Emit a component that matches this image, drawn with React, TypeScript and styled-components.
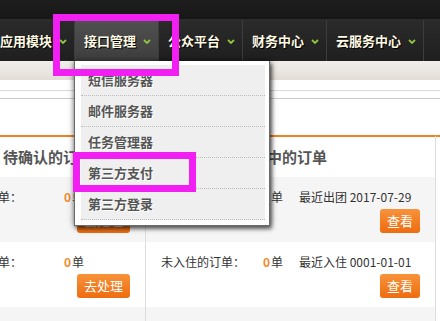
import React from 'react';
import styled, { createGlobalStyle } from 'styled-components';

const GlobalStyle = createGlobalStyle`
  html, body {
    margin: 0;
    padding: 0;
    background: #fff;
    overflow: hidden;
  }
  body {
    font-family: "Noto Sans CJK SC", "Liberation Sans", sans-serif;
  }
`;

const Page = styled.div`
  position: relative;
  width: 440px;
  height: 321px;
  overflow: hidden;
  background: #fff;
`;

const TopBand = styled.div`
  height: 19px;
  background: linear-gradient(#1e1e1e, #171717);
  border-bottom: 1px solid #2e2e2e;
`;

const NavBar = styled.nav`
  height: 41px;
  display: flex;
  margin-left: -9px;
  background: linear-gradient(#2b2b2b, #1f1f1f);
  box-shadow: 0 1px 2px rgba(0, 0, 0, 0.5);
`;

const NavItem = styled.div<{ $active?: boolean }>`
  display: flex;
  align-items: center;
  flex-shrink: 0;
  padding: 0 7px 0 9px;
  border-right: 1px solid #3d3d3d;
  background: ${p => (p.$active ? 'linear-gradient(#505050, #3e3e3e)' : 'transparent')};
  color: #fffae3;
  font-size: 13px;
  font-weight: bold;
  white-space: nowrap;
  text-shadow: 1px 1px 0 #000;
`;

const Chevron = styled.svg`
  margin-left: 7px;
  margin-top: 2px;
`;

const SubBand = styled.div`
  height: 19px;
  background: linear-gradient(#f1efeb, #e9e5e0 60%, #e2ddd6);
`;

const Crumbs = styled.div`
  height: 7px;
  margin-top: 10px;
  border-top: 1px solid #dadada;
  border-bottom: 1px solid #c9c9c9;
`;

const Panels = styled.div`
  display: flex;
  margin-top: 36px;
  margin-left: -53px;
`;

const Panel = styled.section<{ $width: number }>`
  flex-shrink: 0;
  width: ${p => p.$width}px;
  box-sizing: border-box;
  border-top: 2px solid #f08020;
  border-right: 1px solid #dddddd;
`;

const PanelTitle = styled.h3<{ $indent: number }>`
  margin: 0;
  height: 40px;
  line-height: 40px;
  padding-left: ${p => p.$indent}px;
  font-size: 15px;
  font-weight: bold;
  color: #555;
  white-space: nowrap;
  overflow: hidden;
`;

const Row = styled.div`
  height: 65px;
  box-sizing: border-box;
  padding: 11px 15px 0;
  display: flex;
  flex-direction: column;
  background: #fff;

  &:nth-of-type(odd) {
    background: #f5f5f5;
  }
`;

const InfoLine = styled.div`
  display: flex;
  align-items: center;
  height: 16px;
  font-size: 12px;
  color: #333;
  white-space: nowrap;
`;

const Label = styled.span`
  width: 102px;
  flex-shrink: 0;
`;

const Count = styled.span`
  width: 36px;
  flex-shrink: 0;

  b {
    color: #f28a2e;
    font-weight: bold;
    margin-right: 1px;
  }
`;

const ActionButton = styled.button`
  align-self: flex-end;
  margin-top: 5px;
  height: 24px;
  padding: 0 7px;
  border: none;
  border-radius: 3px;
  background: linear-gradient(#f7933b, #ee6c10);
  color: #fff;
  font-family: inherit;
  font-size: 13px;
  line-height: 24px;
  cursor: pointer;
`;

const Dropdown = styled.ul`
  position: absolute;
  left: 74px;
  top: 61px;
  width: 196px;
  box-sizing: border-box;
  margin: 0;
  padding: 4px 4px 5px 6px;
  list-style: none;
  background: #fff;
  border: 1px solid #6a6a6a;
  border-top: none;
  box-shadow: 0 0 6px rgba(0, 0, 0, 0.55), 2px 3px 4px rgba(0, 0, 0, 0.5);
`;

const DropItem = styled.li`
  height: 30px;
  line-height: 30px;
  padding-left: 7px;
  background: #efefef;
  border-bottom: 1px dotted #bbbbbb;
  color: #555;
  font-size: 13px;
  font-weight: bold;
  text-shadow: 1px 1px 0 #fff;
  white-space: nowrap;
`;

const Highlight = styled.div<{ $x: number; $y: number; $w: number; $h: number }>`
  position: absolute;
  left: ${p => p.$x}px;
  top: ${p => p.$y}px;
  width: ${p => p.$w}px;
  height: ${p => p.$h}px;
  box-sizing: border-box;
  border: 7px solid #f21ff2;
  pointer-events: none;
`;

const navItems = ['应用模块', '接口管理', '公众平台', '财务中心', '云服务中心'];
const menuItems = ['短信服务器', '邮件服务器', '任务管理器', '第三方支付', '第三方登录'];

const ChevronIcon = () => (
  <Chevron width="8" height="5" viewBox="0 0 8 5">
    <polyline points="1,1 4,4 7,1" fill="none" stroke="#8dc63f" strokeWidth="1.8" />
  </Chevron>
);

export default function App() {
  return (
    <Page>
      <GlobalStyle />
      <TopBand />
      <NavBar>
        {navItems.map(item => (
          <NavItem key={item} $active={item === '接口管理'}>
            {item}
            <ChevronIcon />
          </NavItem>
        ))}
      </NavBar>
      <SubBand />
      <Crumbs />
      <Panels>
        <Panel $width={199}>
          <PanelTitle $indent={56}>待确认的订单</PanelTitle>
          <Row>
            <InfoLine>
              <Label>线路订单：</Label>
              <Count><b>0</b>单</Count>
            </InfoLine>
            <ActionButton>去处理</ActionButton>
          </Row>
          <Row>
            <InfoLine>
              <Label>酒店订单：</Label>
              <Count><b>0</b>单</Count>
            </InfoLine>
            <ActionButton>去处理</ActionButton>
          </Row>
          <Row />
        </Panel>
        <Panel $width={290}>
          <PanelTitle $indent={46}>已确认在团中的订单</PanelTitle>
          <Row>
            <InfoLine>
              <Label>未出团的订单：</Label>
              <Count><b>0</b>单</Count>
              <span>最近出团 2017-07-29</span>
            </InfoLine>
            <ActionButton>查看</ActionButton>
          </Row>
          <Row>
            <InfoLine>
              <Label>未入住的订单：</Label>
              <Count><b>0</b>单</Count>
              <span>最近入住 0001-01-01</span>
            </InfoLine>
            <ActionButton>查看</ActionButton>
          </Row>
          <Row />
        </Panel>
        <Panel $width={200} />
      </Panels>
      <Dropdown>
        {menuItems.map(item => (
          <DropItem key={item}>{item}</DropItem>
        ))}
      </Dropdown>
      <Highlight $x={53} $y={14} $w={126} $h={62} />
      <Highlight $x={73} $y={152} $w={123} $h={40} />
    </Page>
  );
}
